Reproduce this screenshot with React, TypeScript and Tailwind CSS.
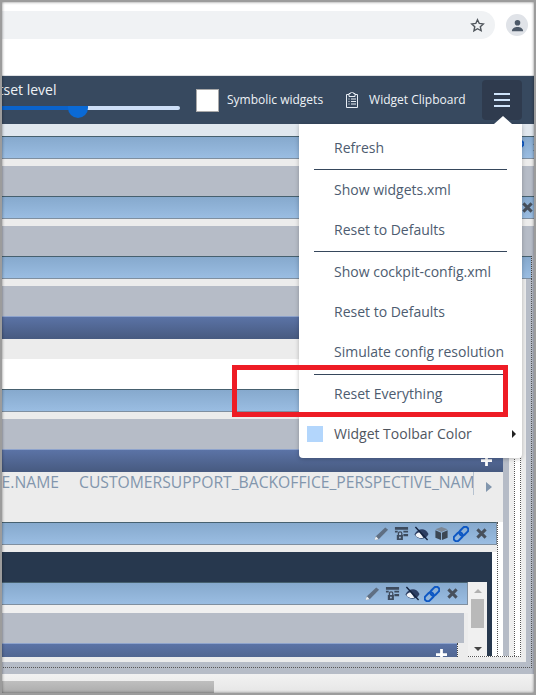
const font = { fontFamily: '"Open Sans", "Noto Sans", sans-serif' };

const BlueBar = ({ children, className = "" }: { children?: React.ReactNode; className?: string }) => (
  <div className={`flex h-[23px] items-center justify-end border-y border-t-[#46606f] border-b-[#7f8fa0] bg-gradient-to-b from-[#86a9cd] to-[#9abde2] ${className}`}>
    {children}
  </div>
);

const DarkBar = ({ children }: { children?: React.ReactNode }) => (
  <div className="flex h-[23px] items-start justify-end border-t border-[#8ea3cc] bg-gradient-to-b from-[#5b73a6] to-[#475a80]">{children}</div>
);

const Plus = ({ className = "" }: { className?: string }) => (
  <svg viewBox="0 0 12 12" className={`h-[11px] w-[11px] ${className}`}>
    <path d="M4.500 0h3v4.500H12v3H7.500V12h-3V7.500H0v-3h4.500z" fill="#fff" />
  </svg>
);

const Gray = ({ className = "" }: { className?: string }) => <div className={`h-[30px] bg-[#b6bcc7] ${className}`} />;
const Strip = () => <div className="h-[7px] bg-[#ececec]" />;

const Cell = ({ children }: { children: React.ReactNode }) => (
  <div className="flex w-5 items-center justify-center">{children}</div>
);

const Pencil = () => (
  <svg viewBox="0 0 16 16" className="h-[15px] w-[15px]">
    <path d="M.5 15l1.500-4L12 1.500l3 2.500L5 14z" fill="#5f6f83" />
    <path d="M.5 15l1.500-4 3 3z" fill="#eef1f4" />
  </svg>
);

const LockTable = () => (
  <svg viewBox="0 0 16 16" className="h-[15px] w-[15px]">
    <path d="M1 1h14v3H1zM1 5h3v2H1zM10 5h5v2h-5zM10 8.500h5V11h-5z" fill="#3d4b5e" />
    <path d="M3 15V9.500h1V8a2.500 2.500 0 015 0v1.500h.500V15z" fill="#3d4b5e" />
    <path d="M5.400 9.500V8a1.100 1.100 0 012.200 0v1.500z" fill="#a3bfdf" />
    <circle cx="6.300" cy="12.200" r="1" fill="#a3bfdf" />
  </svg>
);

const EyeOff = () => (
  <svg viewBox="0 0 16 16" className="h-[15px] w-[15px]">
    <path d="M.5 9C2.500 5 5.500 3.500 8.500 3.500c2.500 0 5 1.500 7 5-1.500 3-4 5-7 5-3.500 0-6-1.500-8-4.500z" fill="#2c3e63" />
    <path d="M1.500 9.500C3 7.500 4.500 7 6 7l4 5.500c-3.500.800-6.500 0-8.500-3z" fill="#f4f6fa" />
    <path d="M1.500 1l13 14" stroke="#14233f" strokeWidth="1.500" />
  </svg>
);

const Cube = () => (
  <svg viewBox="0 0 16 16" className="h-[15px] w-[15px]">
    <path d="M8 1l6.500 2.500L8 6.300 1.500 3.500z" fill="#7c8794" />
    <path d="M1.500 4.500l6 2.600V15l-6-2.500zM14.500 4.500l-6 2.600V15l6-2.500z" fill="#3c4754" />
  </svg>
);

const Chain = () => (
  <svg viewBox="0 0 16 16" className="h-4 w-4" fill="none" stroke="#0e58c4" strokeWidth="2">
    <g transform="rotate(-45 8 8)">
      <rect x="-1" y="5" width="10" height="6" rx="3" />
      <rect x="7" y="5" width="10" height="6" rx="3" />
    </g>
  </svg>
);

const Close = ({ className = "" }: { className?: string }) => (
  <svg viewBox="0 0 12 12" className={`h-[11px] w-[11px] shrink-0 ${className}`}>
    <path d="M1.500 1.500l9 9M10.500 1.500l-9 9" stroke="#47505c" strokeWidth="3.200" />
  </svg>
);

const MenuRow = ({ label }: { label: string }) => (
  <div className="flex h-10 items-center pb-px pl-[35px] text-[14px] text-[#4d5c70]">{label}</div>
);

const Divider = ({ className = "" }: { className?: string }) => <div className={`mx-[15px] h-px bg-[#36475c] ${className}`} />;

const Nested = () => (
  <div className="flex h-[74px] w-[487px]">
    <div className="w-[468px]">
      <BlueBar className="h-[22px] border-r border-r-[#7f8fa0] pr-[5px]">
        <Cell><Pencil /></Cell>
        <Cell><LockTable /></Cell>
        <Cell><EyeOff /></Cell>
        <Cell><Chain /></Cell>
        <Cell><Close /></Cell>
      </BlueBar>
      <div className="h-[8px] bg-[#f0f0f0]" />
      <div className="bg-[#ececec]">
        <Gray className="mr-1" />
        <div className="mr-[10px] border-r border-dotted border-[#444]">
          <div className="flex h-[14px] justify-end overflow-hidden border-t border-[#8ea3cc] bg-gradient-to-b from-[#5b73a6] to-[#526792]">
            <Plus className="mr-[10px] mt-[5px]" />
          </div>
        </div>
      </div>
    </div>
    <div className="flex flex-1 flex-col items-center bg-[#f0f0f0]">
      <div className="mt-[7px] h-0 w-0 border-x-[4px] border-b-[4px] border-x-transparent border-b-[#b0b0b0]" />
      <div className="mt-[6px] h-[29px] w-[13px] bg-[#b9b9b9]" />
      <div className="mt-[19px] h-0 w-0 border-x-[4px] border-t-[4px] border-x-transparent border-t-[#444]" />
    </div>
  </div>
);

export default function App() {
  return (
    <div style={font} className="relative h-[695px] w-[536px] overflow-hidden bg-white">
      {/* browser chrome */}
      <div className="h-[10px] bg-white" />
      <div className="flex h-[29px] items-end">
        <div className="flex h-[28px] w-[495px] items-center justify-end rounded-r-full bg-[#f0f2f4] pr-[10px]">
          <svg viewBox="0 0 16 16" className="h-[15px] w-[15px]">
            <path d="M8 1.800l1.900 4 4.300.5-3.200 3 .9 4.300L8 11.400l-3.800 2.200.9-4.300-3.200-3 4.300-.5z" fill="none" stroke="#50565c" strokeWidth="1.500" />
          </svg>
        </div>
        <div className="mb-[3px] ml-[11px] flex h-[22px] w-[22px] items-center justify-center rounded-full bg-[#e0e3e8]">
          <svg viewBox="0 0 16 16" className="h-[15px] w-[15px]">
            <circle cx="8" cy="5" r="3" fill="#4d5968" />
            <path d="M2 14c0-3 3-4.500 6-4.500s6 1.500 6 4.500z" fill="#4d5968" />
          </svg>
        </div>
      </div>
      <div className="h-[37px] border-b border-[#dfe1e4] bg-white" />

      {/* toolbar */}
      <div className="flex h-[48px] items-center bg-[#37495f] text-white">
        <div className="h-full w-[180px] pt-1">
          <div className="-ml-[42px] whitespace-nowrap text-[14px] leading-[20px] text-[#eef2f6]">Widgetset level</div>
          <div className="relative mt-[6px] flex h-1 w-full">
            <div className="h-1 w-[70px] bg-[#0a63cc]" />
            <div className="h-1 flex-1 rounded-r-full bg-[#cddff7]" />
            <div className="absolute left-[68px] top-0 h-[12px] w-5 rounded-b-full bg-[#0a6ad6]" />
          </div>
        </div>
        <div className="ml-4 h-[23px] w-[23px] border border-[#a9a9a9] bg-white" />
        <span className="ml-2 whitespace-nowrap text-[12px] font-medium text-[#eef2f6]">Symbolic widgets</span>
        <svg viewBox="0 0 14 16" className="ml-[22px] h-[16px] w-[14px]" fill="none" stroke="#e7edf4" strokeWidth="1">
          <path d="M4 2.500H1.500v13h11v-13H10M4 1.500h1.500a1.500 1.500 0 013 0H10v3H4zM6 7h5M6 9.500h5M6 12h5M3.500 7h1M3.500 9.500h1M3.500 12h1" />
        </svg>
        <span className="ml-[10px] whitespace-nowrap text-[12px] font-medium text-[#eef2f6]">Widget Clipboard</span>
        <div className="ml-auto mr-[14px] flex h-10 w-10 flex-col items-center justify-center gap-[4px] rounded bg-[#2f3b4e]">
          <div className="h-[2px] w-4 bg-[#cfe4fb]" />
          <div className="h-[2px] w-4 bg-[#cfe4fb]" />
          <div className="h-[2px] w-4 bg-[#cfe4fb]" />
        </div>
      </div>

      {/* background widgets */}
      <div className="h-[12px] bg-[#e0e7ee]" />
      <BlueBar className="overflow-hidden">
        <Chain />
        <Close className="-mr-[8px] ml-[9px]" />
      </BlueBar>
      <Strip />
      <Gray />
      <BlueBar className="pr-[3px]">
        <Close />
      </BlueBar>
      <Strip />
      <Gray />
      <div className="bg-[#b6bcc7] pr-1">
        <div className="border-r border-dotted border-[#444]">
          <BlueBar />
        </div>
      </div>

      {/* nested frames, right gutters and bottom strips */}
      <div className="bg-[#b6bcc7] pb-[6px] pr-1">
        <div className="border-b border-r border-dotted border-[#555] bg-[#b6bcc7] pb-[5px] pr-[5px]">
          <div className="bg-[#ececec] pb-[5px] pr-[5px]">
            <div className="flex border-b border-r border-dotted border-[#555] bg-white">
              <div className="w-[503px] shrink-0">
                <Strip />
                <Gray />
                <DarkBar />
                <div className="h-[20px] bg-[#ececec]" />
                <div className="h-[30px] bg-white" />
                <BlueBar />
                <Strip />
                <Gray />
                <DarkBar>
                  <Plus className="mr-[11px] mt-[5px]" />
                </DarkBar>

                <div className="flex h-[50px] items-start overflow-hidden whitespace-nowrap bg-[#ececec] text-[15.700px] leading-[20px] text-[#8296ad]">
                  <div className="flex w-[59px] shrink-0 justify-end overflow-hidden">
                    <span className="shrink-0">E.NAME</span>
                  </div>
                  <div className="ml-5 h-[23px] w-[395px] shrink-0 overflow-hidden border-r border-[#b6c2d0]">CUSTOMERSUPPORT_BACKOFFICE_PERSPECTIVE_NAME</div>
                  <div className="ml-3 mt-[10px] h-0 w-0 border-y-[5px] border-l-[6px] border-y-transparent border-l-[#8296ad]" />
                </div>

                <div className="flex">
                  <div className="w-[497px] shrink-0">
                    <BlueBar className="border-r border-r-[#7f8fa0] pr-[5px]">
                      <Cell><Pencil /></Cell>
                      <Cell><LockTable /></Cell>
                      <Cell><EyeOff /></Cell>
                      <Cell><Cube /></Cell>
                      <Cell><Chain /></Cell>
                      <Cell><Close /></Cell>
                    </BlueBar>
                    <Strip />
                    <div className="flex h-[104px] bg-white">
                      <div className="w-[492px] bg-[#27384e] pt-[30px]">
                        <Nested />
                      </div>
                    </div>
                  </div>
                  <div className="flex-1 border-l border-dotted border-[#555] bg-white" />
                </div>
              </div>
              <div className="w-[6px] bg-[#b6bcc7]" />
              <div className="w-[5px] bg-[#f0f0f0]" />
              <div className="flex-1 border-l border-dotted border-[#555] bg-white" />
            </div>
          </div>
        </div>
      </div>

      {/* page scrollbar */}
      <div className="h-[22px] bg-gradient-to-b from-[#f2f2f2] to-[#e4e4e4] pt-[7px]">
        <div className="h-[13px] w-[214px] bg-gradient-to-b from-[#bfbfbf] to-[#aaaaaa]" />
      </div>

      {/* menu over the toolbar */}
      <div className="absolute left-[299px] top-[124px] w-[223px] rounded-b bg-white pb-[4px] pt-[4px] shadow-[0_1px_4px_rgba(0,0,0,0.25)]">
        <div className="absolute -top-[8px] right-[10px] h-0 w-0 border-x-[9px] border-b-[8px] border-x-transparent border-b-white" />
        <MenuRow label="Refresh" />
        <Divider className="mt-px" />
        <MenuRow label="Show widgets.xml" />
        <MenuRow label="Reset to Defaults" />
        <Divider className="mt-px" />
        <MenuRow label="Show cockpit-config.xml" />
        <MenuRow label="Reset to Defaults" />
        <MenuRow label="Simulate config resolution" />
        <Divider className="mt-[2px] -mb-px" />
        <MenuRow label="Reset Everything" />
        <div className="flex h-10 items-center pb-px pl-2 text-[14px] text-[#50565f]">
          <div className="mr-[11px] h-4 w-4 bg-[#b3d6fc]" />
          Widget Toolbar Color
          <div className="ml-auto mr-[6px] h-0 w-0 border-y-[4px] border-l-[4px] border-y-transparent border-l-[#222]" />
        </div>
      </div>

      {/* annotation */}
      <div className="absolute left-[232px] top-[365px] h-[52px] w-[276px] border-[5px] border-[#ee1c25]" />

      {/* window frame */}
      <div className="pointer-events-none absolute inset-0 border-2 border-[#9c9c9c] shadow-[inset_0_0_3px_rgba(0,0,0,0.5)]" />
    </div>
  );
}
